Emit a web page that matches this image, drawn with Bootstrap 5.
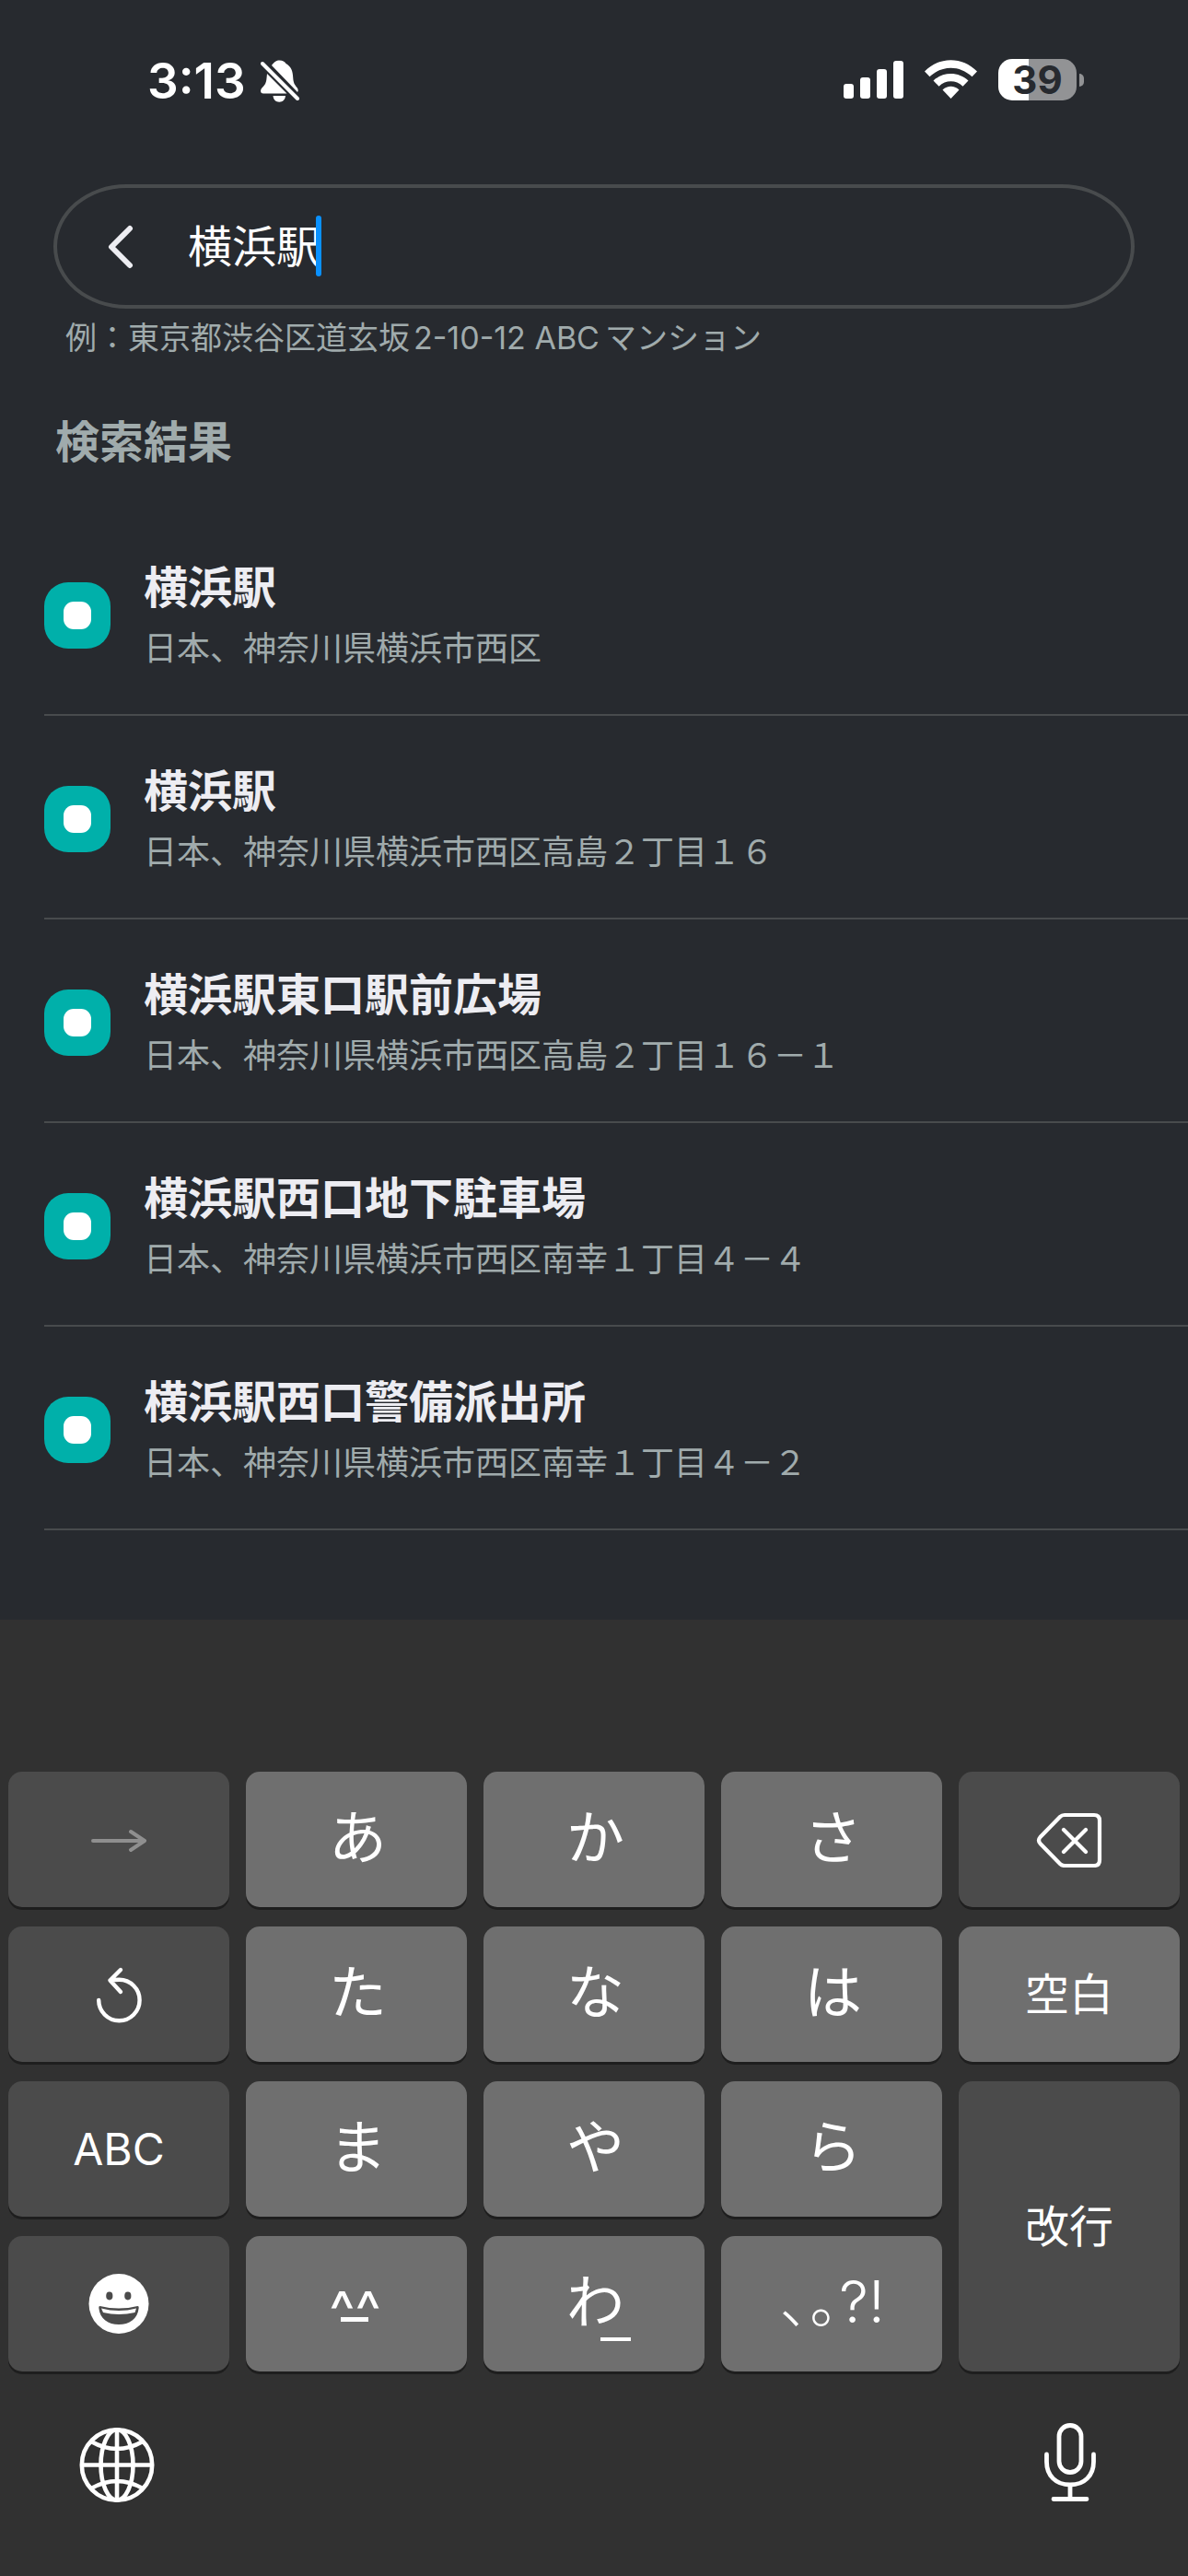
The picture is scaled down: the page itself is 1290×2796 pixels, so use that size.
<!DOCTYPE html>
<html lang="ja">
<head>
<meta charset="utf-8">
<meta name="viewport" content="width=device-width, initial-scale=1">
<title>検索結果</title>
<link href="https://cdn.jsdelivr.net/npm/bootstrap@5.3.0/dist/css/bootstrap.min.css" rel="stylesheet">
<style>
:root { --screen: #272a2f; --line: #484b4d; --muted: #a0abac; --teal: #00b0aa; }
body { background: var(--screen); color: #fff; font-family: Inter, "Noto Sans CJK JP", sans-serif; font-size: 48px; }
svg { display: block; flex: none; }
.status { padding: 64px 113px 0 160px; height: 200px; }
.clock { font-size: 53px; font-weight: 600; line-height: 48px; }
.battery { width: 85px; height: 45px; border-radius: 15px; background: linear-gradient(90deg, #fff 33px, #929395 33px); color: var(--screen); font-size: 42px; font-weight: 700; line-height: 45px; }
.nub { width: 5px; height: 14px; border-radius: 0 7px 7px 0; background: #929395; margin-left: 3px; }
.signals { margin-right: 22px; }
.search { margin: 0 58px; height: 135px; border: 4px solid var(--line); border-radius: 80px / 68px; padding-left: 52px; }
.back { width: 34px; }
.field { margin-left: 56px; }
.field input { height: 72px; font-size: 48px; line-height: 72px; color: #fff; }
.caret { left: 139px; top: 2px; width: 6px; height: 66px; border-radius: 3px; background: #0a91ff; }
.hint { margin: 8px 71px 0; font-size: 34px; line-height: 48px; color: var(--muted); }
.latin { margin: 0 6px 0 4px; }
.heading { margin: 53px 60px 40px; font-size: 48px; line-height: 72px; font-weight: 700; color: var(--muted); }
.results { margin-left: 48px; }
.result { gap: 36px; padding: 46px 0 41px; border-bottom: 2px solid var(--line); color: #ededf2; }
.pin { width: 72px; height: 72px; border-radius: 26px; background: var(--teal); }
.pin::after { content: ""; width: 30px; height: 30px; border-radius: 11px; background: #fff; }
.place { font-size: 48px; line-height: 72px; font-weight: 700; }
.addr { font-size: 36px; line-height: 60px; color: var(--muted); }
.keyboard { background: #313131; padding-top: 165px; }
.keys { display: grid; grid-template-columns: repeat(5, 1fr); grid-auto-rows: 147px; gap: 21px 18px; padding: 0 9px; }
.key { border: 0; border-radius: 15px; background: #6f6f6f; color: #fff; box-shadow: 0 3px 0 #1e1e1e; font-size: 63px; line-height: 72px; padding: 0 0 6px 3px; }
.key-fn { background: #4b4b4b; padding: 0; }
.key-word { font-size: 48px; padding: 0; }
.key-tall { grid-row: span 2; }
.key-thin { font-weight: 300; }
.face { font-size: 60px; padding: 12px 3px 0 0; }
.under { left: 50%; bottom: 54px; width: 30px; height: 5px; margin-left: -17px; background: #fff; }
.under-right { width: 33px; height: 4px; bottom: 33px; margin-left: 7px; }
.tools { padding: 56px 84px 80px; }
</style>
</head>
<body class="d-flex flex-column min-vh-100">
<header class="status d-flex align-items-start justify-content-between">
  <div class="d-flex align-items-center gap-3">
    <span class="clock">3:13</span>
    <svg width="44" height="48" viewBox="281 64 44 48" aria-label="消音"><path fill="#fff" d="M293 71C296 67 298 65.500 301.500 65.500C305 65.500 307 67 308.500 69C314 72 316 77 316.200 84C316.500 90 318 92 320.500 95C322 97 322 99 321 100Z"/><path fill="#fff" d="M288 80L309.500 101.500H284C280.500 101.500 280.500 98 282 96C286 92 287 90 287.500 85ZM294.500 104H308C307.500 108.500 305 110.700 301.300 110.700C297.500 110.700 295 108.500 294.500 104Z"/><path d="M283 69L321 107" stroke="#fff" stroke-width="4" stroke-linecap="round"/></svg>
  </div>
  <div class="d-flex align-items-center">
    <svg class="signals" width="146" height="45" viewBox="916 64 146 45" fill="#fff" aria-label="電波"><rect x="916" y="91" width="11" height="16" rx="3"/><rect x="934" y="84" width="11" height="23" rx="3"/><rect x="952" y="75" width="11" height="32" rx="3"/><rect x="970" y="66" width="11" height="41" rx="3"/><path d="M1004 77.500C1020 61 1045 61 1061 77.500L1055.500 83.300C1042 70.500 1023 70.500 1009.500 83.300ZM1013.500 87.500C1024 77.500 1041 77.500 1051.500 87.500L1045.500 93.700C1038 86.500 1027 86.500 1019.500 93.700ZM1023.500 97.500C1029 92.500 1036 92.500 1041.500 97.500L1032.500 107Z"/></svg>
    <span class="battery text-center">39</span><span class="nub"></span>
  </div>
</header>
<main>
  <form class="search d-flex align-items-center">
    <button type="button" class="back btn p-0 border-0" aria-label="戻る"><svg width="34" height="50" viewBox="0 0 34 50"><path d="M27 5L7 25L27 45" fill="none" stroke="#ededf2" stroke-width="6" stroke-linecap="round" stroke-linejoin="round"/></svg></button>
    <div class="field position-relative flex-grow-1">
      <input id="q" type="text" class="w-100 bg-transparent border-0 p-0 d-block" value="横浜駅" aria-label="住所" aria-describedby="hint">
      <span class="caret position-absolute"></span>
    </div>
  </form>
  <p class="hint" id="hint">例：東京都渋谷区道玄坂<span class="latin">2-10-12 ABC</span>マンション</p>
  <h1 class="heading">検索結果</h1>
  <ul class="results list-unstyled mb-0">
    <li><a href="#" class="result d-flex align-items-center text-decoration-none"><span class="pin d-flex align-items-center justify-content-center"></span><span><span class="place d-block">横浜駅</span><span class="addr d-block">日本、神奈川県横浜市西区</span></span></a></li>
    <li><a href="#" class="result d-flex align-items-center text-decoration-none"><span class="pin d-flex align-items-center justify-content-center"></span><span><span class="place d-block">横浜駅</span><span class="addr d-block">日本、神奈川県横浜市西区高島２丁目１６</span></span></a></li>
    <li><a href="#" class="result d-flex align-items-center text-decoration-none"><span class="pin d-flex align-items-center justify-content-center"></span><span><span class="place d-block">横浜駅東口駅前広場</span><span class="addr d-block">日本、神奈川県横浜市西区高島２丁目１６－１</span></span></a></li>
    <li><a href="#" class="result d-flex align-items-center text-decoration-none"><span class="pin d-flex align-items-center justify-content-center"></span><span><span class="place d-block">横浜駅西口地下駐車場</span><span class="addr d-block">日本、神奈川県横浜市西区南幸１丁目４－４</span></span></a></li>
    <li><a href="#" class="result d-flex align-items-center text-decoration-none"><span class="pin d-flex align-items-center justify-content-center"></span><span><span class="place d-block">横浜駅西口警備派出所</span><span class="addr d-block">日本、神奈川県横浜市西区南幸１丁目４－２</span></span></a></li>
  </ul>
</main>
<section class="keyboard mt-auto" aria-label="キーボード">
  <div class="keys">
    <button type="button" class="key key-fn d-flex align-items-center justify-content-center" aria-label="次へ"><svg width="60" height="26" viewBox="0 0 60 26"><path d="M2 14H58M43 4L58 14L43 24" fill="none" stroke="#8f8f8f" stroke-width="4" stroke-linecap="round" stroke-linejoin="round"/></svg></button>
    <button type="button" class="key">あ</button>
    <button type="button" class="key">か</button>
    <button type="button" class="key">さ</button>
    <button type="button" class="key key-fn d-flex align-items-center justify-content-center" aria-label="削除"><svg width="78" height="60" viewBox="1122 1967 78 60"><path d="M1156 1970H1188Q1194 1970 1194 1976V2019Q1194 2025 1188 2025H1156Q1153 2025 1151 2023L1129.500 2001Q1126.500 1997.500 1129.500 1994L1151 1972Q1153 1970 1156 1970ZM1155 1986L1179 2010M1179 1986L1155 2010" fill="none" stroke="#fff" stroke-width="4.200" stroke-linecap="round" stroke-linejoin="round"/></svg></button>

    <button type="button" class="key key-fn d-flex align-items-center justify-content-center" aria-label="元に戻す"><svg width="60" height="64" viewBox="99 2133 60 64"><path d="M107.200 2171A22.200 22.200 0 1 0 129.400 2148.800Q124 2148.800 119.500 2149.500M131 2138L119.500 2149.500L131 2162" fill="none" stroke="#fff" stroke-width="4.400" stroke-linecap="round" stroke-linejoin="round"/></svg></button>
    <button type="button" class="key">た</button>
    <button type="button" class="key">な</button>
    <button type="button" class="key">は</button>
    <button type="button" class="key key-word">空白</button>

    <button type="button" class="key key-fn key-word">ABC</button>
    <button type="button" class="key">ま</button>
    <button type="button" class="key">や</button>
    <button type="button" class="key">ら</button>
    <button type="button" class="key key-fn key-word key-tall">改行</button>

    <button type="button" class="key key-fn d-flex align-items-center justify-content-center" aria-label="絵文字"><svg width="66" height="66" viewBox="96.500 2467 66 66"><circle cx="129.500" cy="2499.500" r="32.500" fill="#fff"/><g fill="#4b4b4b"><ellipse cx="119.300" cy="2491" rx="3.600" ry="4.400"/><ellipse cx="139.300" cy="2491" rx="3.600" ry="4.400"/></g><path d="M109 2502Q129.500 2507 150 2502Q151.500 2502 151.200 2504C150 2516 141 2522 129.500 2522S109 2516 107.800 2504Q107.500 2502 109 2502Z" fill="#4b4b4b"/><path d="M110.500 2504.500Q129.500 2509.500 148.500 2504.500L147 2509Q129.500 2513 112.500 2509Z" fill="#fff"/></svg></button>
    <button type="button" class="key face position-relative">^^<span class="under position-absolute"></span></button>
    <button type="button" class="key position-relative">わ<span class="under under-right position-absolute"></span></button>
    <button type="button" class="key key-thin">､｡?!</button>
  </div>
  <div class="tools d-flex justify-content-between">
    <button type="button" class="btn p-0 border-0" aria-label="言語"><svg width="86" height="86" viewBox="84.500 2630 86 86"><g fill="none" stroke="#fff" stroke-width="4.600"><circle cx="127.500" cy="2675.500" r="38.200"/><ellipse cx="127.500" cy="2675.500" rx="17.500" ry="38.200"/><path d="M127.500 2637V2714M89 2675.500H166M99.500 2650Q127.500 2666 155.500 2650M99.500 2701Q127.500 2685 155.500 2701"/></g></svg></button>
    <button type="button" class="btn p-0 border-0" aria-label="音声入力"><svg width="86" height="86" viewBox="1120.500 2630 86 86"><g fill="none" stroke="#fff" stroke-width="4.800" stroke-linecap="round"><rect x="1150.500" y="2632.500" width="24" height="51" rx="12"/><path d="M1137 2664V2672C1137 2687 1147 2697 1162.500 2697S1188 2687 1188 2672V2664M1162.500 2697V2712M1144.500 2712.500H1180.500"/></g></svg></button>
  </div>
</section>
<script src="https://cdn.jsdelivr.net/npm/bootstrap@5.3.0/dist/js/bootstrap.bundle.min.js"></script>
</body>
</html>
